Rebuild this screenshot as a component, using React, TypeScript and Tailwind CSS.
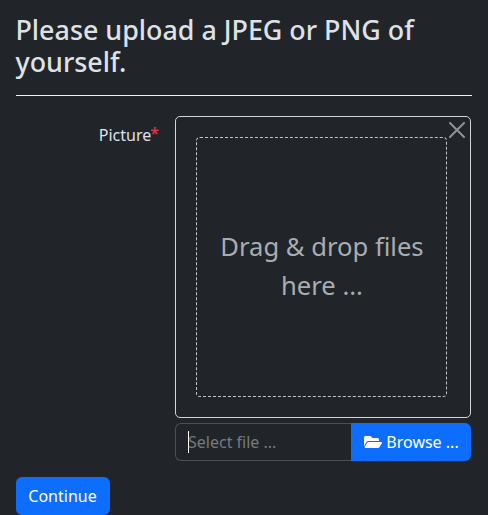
import { FaFolderOpen } from "react-icons/fa";

export default function App() {
  return (
    <main className="h-[515px] w-full overflow-hidden bg-[#212529] px-4 pt-[14px] font-['Noto_Sans',sans-serif] text-base text-[#dee2e6]">
      <h2 className="-ml-px h-[81px] pl-[0.5px] text-[26.85px] leading-8 font-medium">
        Please upload a JPEG or PNG of yourself.
      </h2>
      <hr className="border-t border-[#f0f1f2]" />
      <form>
        <div className="mt-5 flex">
          <label className="w-[143px] shrink-0 pt-[7px] text-right leading-6">
            Picture<sup className="top-[-2px] -ml-px text-base font-semibold text-[#dc3545]">*</sup>
          </label>
          <div className="ml-4 w-[296px] shrink-0">
            <div className="relative h-[302px] rounded-[5px] border border-[#ced4da] py-5 pr-[23px] pl-5">
              <button type="button" aria-label="Close" className="absolute top-[5px] right-[5px] text-[#909294]">
                <svg width="16" height="16" viewBox="0 0 16 16" fill="none" stroke="currentColor" strokeWidth="2" strokeLinecap="round">
                  <path d="M1 1L15 15M15 1L1 15" />
                </svg>
              </button>
              <div className="flex h-[260px] items-center justify-center rounded-[4px] border border-dashed border-[#c2c5c8] pr-4 pb-0.5 pl-[17px] text-center text-[25.6px] leading-[39px] text-[#a9adb1]">
                Drag &amp; drop files here ...
              </div>
            </div>
            <div className="mt-[5px] flex h-[38px]">
              <div className="flex flex-1 items-center rounded-l-md border border-r-0 border-[#495057] pl-3 text-[#777a7c]">
                <span className="-mr-px h-[22px] w-px bg-white" />
                Select file ...
              </div>
              <button type="button" className="flex w-[120px] items-center justify-center gap-1 rounded-r-md bg-[#0d6efd] pl-px text-white">
                <FaFolderOpen className="h-4 w-[18px]" />
                Browse ...
              </button>
            </div>
          </div>
        </div>
        <button type="submit" className="mt-4 h-[38px] w-[94px] rounded-md bg-[#0d6efd] pr-px text-white">
          Continue
        </button>
      </form>
    </main>
  );
}
